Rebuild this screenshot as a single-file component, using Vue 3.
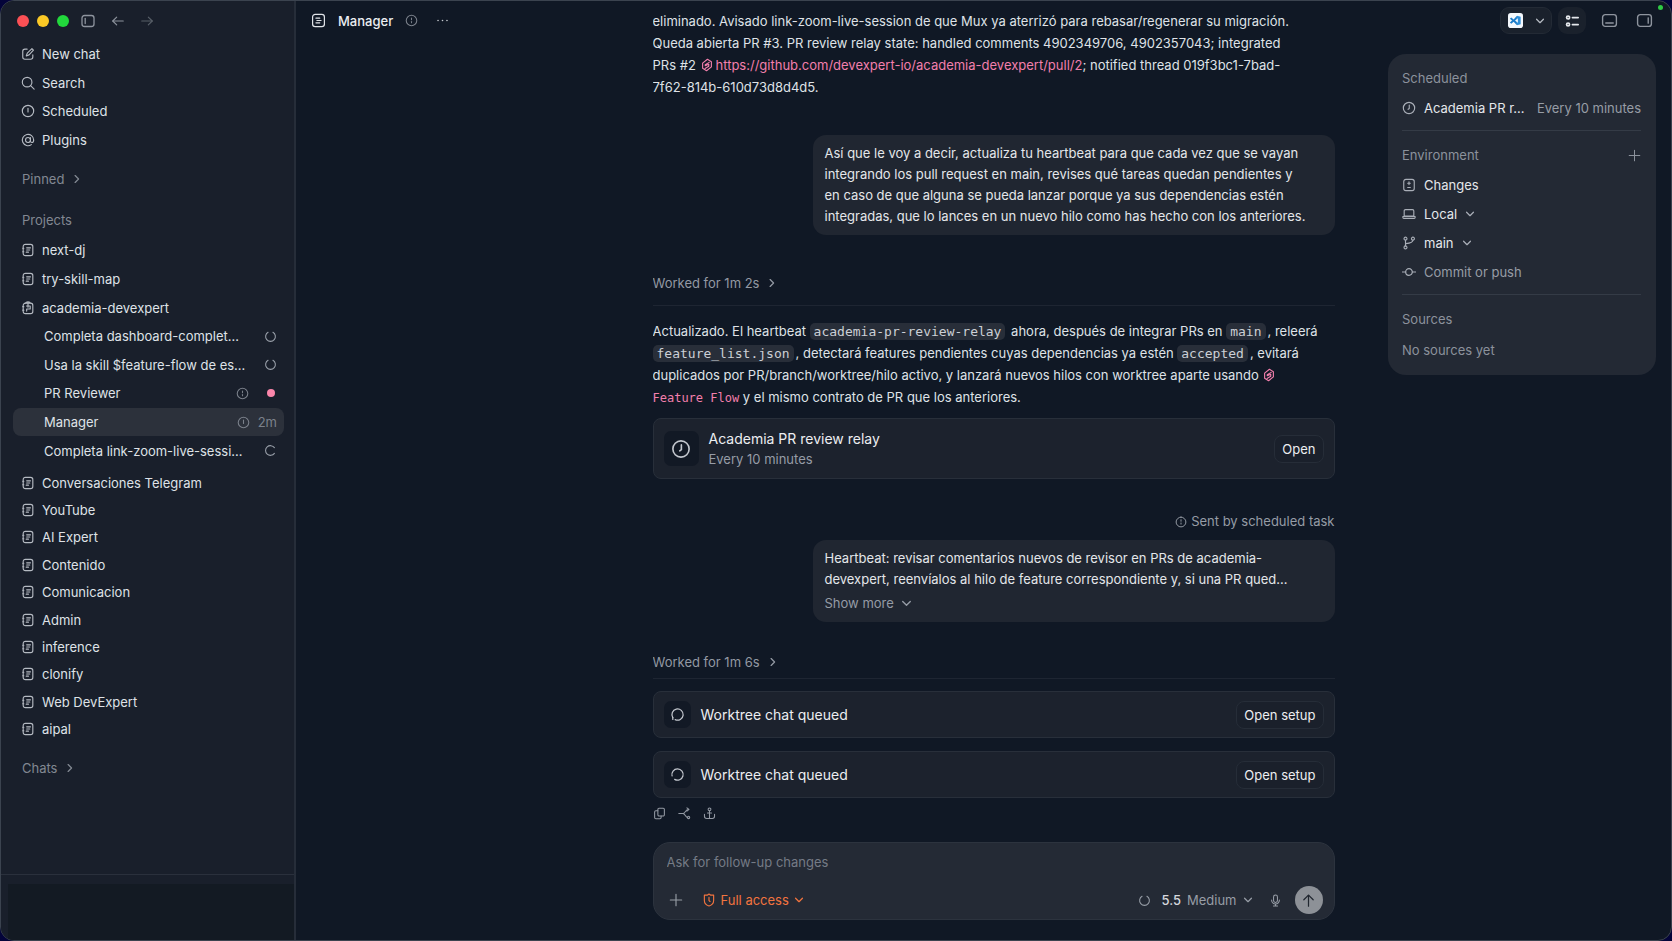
<script setup>
import { h, ref } from "vue";

const icons = {
	panelLeft: ["M4.5 2.5h7a2.5 2.5 0 0 1 2.5 2.5v6a2.5 2.5 0 0 1-2.5 2.5h-7A2.5 2.5 0 0 1 2 11V5a2.5 2.5 0 0 1 2.5-2.5z", "M5.2 5.5v5"],
	panelBottom: ["M4 2.5h8a2.5 2.5 0 0 1 2.5 2.5v6a2.5 2.5 0 0 1-2.5 2.5H4A2.5 2.5 0 0 1 1.5 11V5A2.5 2.5 0 0 1 4 2.5z", "M4.5 10.3h7"],
	panelRight: ["M4 2.5h8a2.5 2.5 0 0 1 2.5 2.5v6a2.5 2.5 0 0 1-2.5 2.5H4A2.5 2.5 0 0 1 1.5 11V5A2.5 2.5 0 0 1 4 2.5z", "M11.5 5.5v5"],
	arrowLeft: ["M14 8H2", "M6.5 3.5 2 8l4.5 4.5"],
	arrowRight: ["M2 8h12", "M9.5 3.5 14 8l-4.5 4.5"],
	arrowUp: ["M8 14V2.5", "M3 7.2l5-5 5 5"],
	compose: ["M7 2.5H4.5A2.5 2.5 0 0 0 2 5v6.5A2.5 2.5 0 0 0 4.5 14H11a2.5 2.5 0 0 0 2.5-2.5V9", "M12.5 1.8l1.7 1.7-5 5.5L6 10.2 7.2 7z"],
	search: ["M7 1.5a5.5 5.5 0 1 1 0 11 5.5 5.5 0 0 1 0-11z", "M11 11l4 4"],
	clock: ["M8 1.5a6.5 6.5 0 1 1 0 13 6.5 6.5 0 0 1 0-13z", "M8.3 4.7v3.8L7 9.5"],
	alert: ["M8 1.5a6.5 6.5 0 1 1 0 13 6.5 6.5 0 0 1 0-13z", "M8 5v4.2"],
	info: ["M8 1.5a6.5 6.5 0 1 1 0 13 6.5 6.5 0 0 1 0-13z", "M8 5v2", "M8 9.3v1.5"],
	at: ["M8 5.2a2.8 2.8 0 1 1 0 5.6 2.8 2.8 0 0 1 0-5.6z", "M10.8 5.3v3.6c0 1.3.7 2 1.7 2s2-.9 2-2.9a6.5 6.5 0 1 0-2.7 5.3"],
	chevronRight: ["M5 2.5 10.5 8 5 13.5"],
	chevronDown: ["M2.5 5.2 8 10.7l5.5-5.5"],
	project: ["M5 1.5h6A2.5 2.5 0 0 1 13.5 4v8a2.5 2.5 0 0 1-2.5 2.5H5A2.5 2.5 0 0 1 2.5 12V4A2.5 2.5 0 0 1 5 1.5z", "M2 6h1.2M2 10h1.2", "M6.5 5.5h4.3M6.5 8H10M6 10.5h2.5"],
	projectOpen: ["M5 2.5h6A2.5 2.5 0 0 1 13.5 5v7a2.5 2.5 0 0 1-2.5 2.5H5A2.5 2.5 0 0 1 2.5 12V5A2.5 2.5 0 0 1 5 2.5z", "M2 6.5h1.2M2 10.5h1.2", "M5.5 2.5Q5.500 1 8 1t2.5 1.5M8 1.5V7M6.3 5.7h4.2v3.5h-4v2.300"],
	thread: ["M4.5 1.5h7a2.8 2.8 0 0 1 2.8 2.8v7.4a2.8 2.8 0 0 1-2.8 2.8h-7a2.8 2.8 0 0 1-2.8-2.8V4.3a2.8 2.8 0 0 1 2.8-2.8z", "M5.3 5.5h4M6.3 8h4.4M5.3 10.5h4"],
	spinnerTop: ["M11 2.8a6 6 0 1 1-6 0"],
	spinnerRight: ["M12.8 11.5a6 6 0 1 1 0-7"],
	spinnerBottomLeft: ["M3 11.300a6 6 0 1 1 2.500 2.200", "M3 11.300v1.900"],
	spinnerLeft: ["M2.2 9.500a6 6 0 1 1 2.800 3.700"],
	dots: ["M2.5 8h.01M8 8h.01M13.5 8h.01"],
	list: ["M3.5 2.3a1.7 1.7 0 1 1 0 3.4 1.7 1.7 0 0 1 0-3.4z", "M3.5 10.3a1.7 1.7 0 1 1 0 3.4 1.7 1.7 0 0 1 0-3.4z", "M8.5 4H15M8.5 12H15"],
	plus: ["M8 1.5v13M1.5 8h13"],
	diff: ["M4.5 1.5h7A2.5 2.5 0 0 1 14 4v8a2.5 2.5 0 0 1-2.5 2.5h-7A2.5 2.5 0 0 1 2 12V4a2.5 2.5 0 0 1 2.5-2.5z", "M8 4.5v3M6.5 6h3M6.5 10.8h3"],
	laptop: ["M4 3h8a1.5 1.5 0 0 1 1.5 1.5v6h-11v-6A1.5 1.5 0 0 1 4 3z", "M1 10.8h14V12a1 1 0 0 1-1 1H2a1 1 0 0 1-1-1z"],
	branch: ["M4 1.3a1.7 1.7 0 1 1 0 3.4 1.7 1.7 0 0 1 0-3.4z", "M4 11.3a1.7 1.7 0 1 1 0 3.4 1.7 1.7 0 0 1 0-3.4z", "M12.5 1.3a1.7 1.7 0 1 1 0 3.4 1.7 1.7 0 0 1 0-3.4z", "M4 4.7v6.6M12.5 4.7c0 3.3-4.5 3.8-8 4"],
	commit: ["M8 4.2a3.8 3.8 0 1 1 0 7.6 3.8 3.8 0 0 1 0-7.6z", "M.5 8h3.7M11.8 8h3.7"],
	copy: ["M7.5 1.5h5A1.5 1.5 0 0 1 14 3v6.5a1.5 1.5 0 0 1-1.5 1.5h-5A1.5 1.5 0 0 1 6 9.5V3a1.5 1.5 0 0 1 1.5-1.5z", "M6 4.5H3.5A1.5 1.5 0 0 0 2 6v7a1.5 1.5 0 0 0 1.5 1.5h5A1.5 1.5 0 0 0 10 13v-2"],
	fork: ["M1 8h5c3 0 3-5 7-5M6 8c3 0 3 5 6 5", "M11 1l2.5 2L11 5.2", "M13 11.5a1.4 1.4 0 1 1 0 2.8 1.4 1.4 0 0 1 0-2.8z"],
	anchor: ["M8 1.2a1.7 1.7 0 1 1 0 3.4 1.7 1.7 0 0 1 0-3.4z", "M8 4.6v9.6M5.5 7.5h5", "M1.8 9v2.5a2.7 2.7 0 0 0 2.7 2.7h7a2.7 2.7 0 0 0 2.7-2.7V9"],
	shield: ["M8 1.2l2 1.3h3.3v6c0 3.5-2.8 5.5-5.3 6.3-2.5-.8-5.3-2.8-5.3-6.3v-6H6z", "M8 5v3.7l1.2 1"],
	mic: ["M8 1.2a2.4 2.4 0 0 1 2.4 2.4V8a2.4 2.4 0 0 1-4.8 0V3.6A2.4 2.4 0 0 1 8 1.2z", "M3.2 7.5a4.8 4.8 0 0 0 9.6 0M8 12.5v2.3M5.5 14.8h5"],
	linked: ["M8.500 1.500 13 4.200v6L7.500 14.500 3 11.800v-6z", "M10.500 5 6 7.800v1L10 7.200v2.300L5.800 12"],
};

function Icon(props) {
	return h(
		"svg",
		{ viewBox: "0 0 16 16", width: props.size, height: props.size, class: "icon", "aria-hidden": "true" },
		icons[props.name].map((d) => h("path", { d }))
	);
}
Icon.props = { name: String, size: { type: Number, default: 14 } };

const nav = [
	{ icon: "compose", label: "New chat" },
	{ icon: "search", label: "Search" },
	{ icon: "alert", label: "Scheduled" },
	{ icon: "at", label: "Plugins" },
];

const openProjects = [
	{ icon: "project", label: "next-dj" },
	{ icon: "project", label: "try-skill-map" },
	{ icon: "projectOpen", label: "academia-devexpert" },
];

const threads = [
	{ label: "Completa dashboard-complet…", spinner: "spinnerTop" },
	{ label: "Usa la skill $feature-flow de es…", spinner: "spinnerTop" },
	{ label: "PR Reviewer", info: "info", unread: true },
	{ label: "Manager", info: "alert", time: "2m", active: true },
	{ label: "Completa link-zoom-live-sessi…", spinner: "spinnerRight" },
];

const projects = [
	"Conversaciones Telegram",
	"YouTube",
	"AI Expert",
	"Contenido",
	"Comunicacion",
	"Admin",
	"inference",
	"clonify",
	"Web DevExpert",
	"aipal",
];

const queued = ["spinnerBottomLeft", "spinnerLeft"];

const message = ref("");
</script>

<template>
	<div class="window">
		<aside class="sidebar">
			<div class="titlebar">
				<span class="light red"></span>
				<span class="light yellow"></span>
				<span class="light green"></span>
				<button class="tool" aria-label="Toggle sidebar"><Icon name="panelLeft" :size="16" /></button>
				<button class="tool" aria-label="Back"><Icon name="arrowLeft" /></button>
				<button class="tool dim" aria-label="Forward"><Icon name="arrowRight" /></button>
			</div>

			<nav class="rows nav">
				<button v-for="item in nav" :key="item.label" class="row">
					<Icon :name="item.icon" />{{ item.label }}
				</button>
			</nav>

			<button class="section">Pinned <Icon name="chevronRight" :size="10" class="chevron" /></button>
			<h2 class="section">Projects</h2>

			<div class="rows open-projects">
				<button v-for="item in openProjects" :key="item.label" class="row">
					<Icon :name="item.icon" />{{ item.label }}
				</button>
			</div>

			<div class="rows threads">
				<button v-for="item in threads" :key="item.label" class="thread" :class="{ active: item.active }">
					<span class="thread-label">{{ item.label }}</span>
					<Icon v-if="item.info" :name="item.info" :size="13" class="muted" />
					<Icon v-if="item.spinner" :name="item.spinner" :size="13" class="soft" />
					<span v-if="item.unread" class="unread"></span>
					<span v-if="item.time" class="time">{{ item.time }}</span>
				</button>
			</div>

			<div class="rows projects">
				<button v-for="label in projects" :key="label" class="row">
					<Icon name="project" />{{ label }}
				</button>
			</div>

			<button class="section">Chats <Icon name="chevronRight" :size="10" class="chevron" /></button>

			<div class="account">
				<div class="account-box"></div>
			</div>
		</aside>

		<main class="main">
			<header class="heading">
				<Icon name="thread" :size="15" />
				<h1>Manager</h1>
				<Icon name="info" :size="13" class="muted" />
				<button class="tool" aria-label="More"><Icon name="dots" :size="13" class="bold" /></button>
			</header>

			<div class="column">
				<div class="conversation">
					<p class="answer">
						eliminado. Avisado link-zoom-live-session de que Mux ya aterrizó para rebasar/regenerar su migración.<br />
						Queda abierta PR #3. PR review relay state: handled comments 4902349706, 4902357043; integrated<br />
						PRs #2
						<a href="https://github.com/devexpert-io/academia-devexpert/pull/2"><Icon name="linked" :size="14" class="inline" />https://github.com/devexpert-io/academia-devexpert/pull/2</a>;
						notified thread 019f3bc1-7bad-<br />
						7f62-814b-610d73d8d4d5.
					</p>

					<p class="bubble first">
						Así que le voy a decir, actualiza tu heartbeat para que cada vez que se vayan<br />
						integrando los pull request en main, revises qué tareas quedan pendientes y<br />
						en caso de que alguna se pueda lanzar porque ya sus dependencias estén<br />
						integradas, que lo lances en un nuevo hilo como has hecho con los anteriores.
					</p>

					<button class="worked spaced">Worked for 1m 2s <Icon name="chevronRight" :size="10" class="chevron" /></button>

					<p class="answer">
						Actualizado. El heartbeat <code>academia-pr-review-relay</code> ahora, después de integrar PRs en
						<code>main</code>, releerá<br />
						<code>feature_list.json</code>, detectará features pendientes cuyas dependencias ya estén
						<code>accepted</code>, evitará<br />
						duplicados por PR/branch/worktree/hilo activo, y lanzará nuevos hilos con worktree aparte usando
						<a href="#"><Icon name="linked" :size="14" class="inline" /><br /><span class="skill">Feature Flow</span></a>
						y el mismo contrato de PR que los anteriores.
					</p>

					<section class="card relay">
						<span class="tile large"><Icon name="clock" :size="20" /></span>
						<div class="card-text">
							<h3>Academia PR review relay</h3>
							<p>Every 10 minutes</p>
						</div>
						<button class="open">Open</button>
					</section>

					<p class="sent"><Icon name="info" :size="12" /> Sent by scheduled task</p>

					<div class="bubble">
						<p>
							Heartbeat: revisar comentarios nuevos de revisor en PRs de academia-<br />
							devexpert, reenvíalos al hilo de feature correspondiente y, si una PR qued…
						</p>
						<button class="more">Show more <Icon name="chevronDown" :size="11" class="chevron" /></button>
					</div>

					<button class="worked">Worked for 1m 6s <Icon name="chevronRight" :size="10" class="chevron" /></button>

					<section v-for="spinner in queued" :key="spinner" class="card">
						<span class="tile"><Icon :name="spinner" :size="15" /></span>
						<h3>Worktree chat queued</h3>
						<button class="open">Open setup</button>
					</section>

					<div class="actions">
						<button aria-label="Copy"><Icon name="copy" :size="13" /></button>
						<button aria-label="Fork"><Icon name="fork" :size="13" /></button>
						<button aria-label="Anchor"><Icon name="anchor" :size="13" /></button>
					</div>
				</div>

				<form class="composer" @submit.prevent>
					<textarea v-model="message" rows="1" aria-label="Message" placeholder="Ask for follow-up changes"></textarea>
					<div class="composer-bar">
						<button type="button" aria-label="Add"><Icon name="plus" /></button>
						<label class="pick access">
							<Icon name="shield" />
							<select aria-label="Access"><option>Full access</option></select>
							<Icon name="chevronDown" :size="10" class="chevron" />
						</label>
						<Icon name="spinnerTop" :size="13" class="usage" />
						<label class="pick model">
							<span>5.5</span>
							<select aria-label="Effort"><option>Medium</option></select>
							<Icon name="chevronDown" :size="10" class="chevron" />
						</label>
						<button type="button" aria-label="Dictate"><Icon name="mic" :size="13" /></button>
						<button class="send" aria-label="Send"><Icon name="arrowUp" :size="15" /></button>
					</div>
				</form>
			</div>

			<div class="side">
				<div class="toolbar">
					<button class="chip editor" aria-label="Open in editor">
						<svg viewBox="0 0 16 16" width="15" height="15" aria-hidden="true">
							<rect width="16" height="16" rx="3" fill="#f4f8fc" />
							<path d="M9.5 3v10L6 9.2l-2.500 2.300L2 10.200 4.300 8 2 6l1.500-1.300L6 6.800z" fill="#1c7cc9" />
							<path d="M9.5 3l4 1v8l-4 1z" fill="#2f8fd8" />
							<path d="M10.5 5.5v5L7.500 8z" fill="#f4f8fc" />
						</svg>
						<Icon name="chevronDown" :size="10" class="chevron" />
					</button>
					<button class="chip" aria-label="Summary"><Icon name="list" class="bright" /></button>
					<button class="tool" aria-label="Toggle terminal"><Icon name="panelBottom" :size="17" /></button>
					<button class="tool" aria-label="Toggle right panel"><Icon name="panelRight" :size="17" /></button>
					<span class="live"></span>
				</div>

				<aside class="panel">
					<h2>Scheduled</h2>
					<button class="entry task">
						<Icon name="clock" />
						<span>Academia PR r…</span>
						<small>Every 10 minutes</small>
					</button>
					<hr />
					<h2>Environment <button aria-label="Add environment"><Icon name="plus" :size="13" /></button></h2>
					<button class="entry"><Icon name="diff" /> Changes</button>
					<label class="entry pick">
						<Icon name="laptop" />
						<select aria-label="Location"><option>Local</option></select>
						<Icon name="chevronDown" :size="10" class="chevron" />
					</label>
					<label class="entry pick">
						<Icon name="branch" />
						<select aria-label="Branch"><option>main</option></select>
						<Icon name="chevronDown" :size="10" class="chevron" />
					</label>
					<button class="entry quiet"><Icon name="commit" /> Commit or push</button>
					<hr />
					<h2>Sources</h2>
					<p>No sources yet</p>
				</aside>
			</div>
		</main>
	</div>
</template>

<style>
body {
	background: #04043a;
}
</style>

<style scoped>
* {
	box-sizing: border-box;
	margin: 0;
}

.window {
	display: flex;
	height: 100vh;
	overflow: hidden;
	border: 1px solid #3b434f;
	border-radius: 14px;
	background: #101825;
	color: #dfe2e7;
	font: 13px/22px Inter, "Liberation Sans", sans-serif;
}

button,
select,
textarea {
	padding: 0;
	border: 0;
	background: none;
	color: inherit;
	font: inherit;
}

button {
	display: flex;
	align-items: center;
	text-align: left;
	white-space: nowrap;
	cursor: pointer;
}

select {
	appearance: none;
	field-sizing: content;
}

h1,
h2,
h3 {
	font-size: 13px;
	font-weight: 400;
}

a {
	color: #f27fac;
	text-decoration: none;
}

.icon {
	flex: none;
	fill: none;
	stroke: currentColor;
	stroke-width: 1.3;
	stroke-linecap: round;
	stroke-linejoin: round;
}

.chevron,
.bold,
.bright {
	stroke-width: 2;
}

.bright {
	color: #e4e7eb;
}

.muted {
	color: #7b818b;
}

.soft {
	color: #9aa0aa;
}

.inline {
	margin-right: 2px;
	vertical-align: -2px;
}

.tool {
	color: #8e949e;
}

.dim {
	color: #596069;
}

/* sidebar */
.sidebar {
	display: flex;
	flex-direction: column;
	flex: none;
	width: 295px;
	border-right: 2px solid #262d39;
	background: #191f2b;
}

.titlebar {
	display: flex;
	align-items: center;
	height: 39px;
	padding-left: 16px;
}

.light {
	width: 12px;
	height: 12px;
	margin-right: 8px;
	border-radius: 50%;
}

.red {
	background: #fb5055;
}

.yellow {
	background: #fbc926;
}

.green {
	background: #22d83c;
}

.titlebar .tool {
	margin-left: 3px;
	margin-right: 12px;
}

.rows {
	display: grid;
	grid-auto-rows: 1fr;
}

.nav {
	height: 114px;
}

.open-projects {
	height: 87px;
}

.threads {
	height: 143px;
	margin-bottom: 4px;
	padding: 0 10px 0 12px;
}

.projects {
	height: 274px;
}

.row {
	gap: 7px;
	padding-left: 20px;
}

.row .icon {
	color: #b5bac2;
}

.section {
	display: flex;
	align-items: center;
	gap: 8px;
	height: 40px;
	margin-top: 5px;
	padding-left: 21px;
	color: #828892;
}

h2.section {
	height: 31px;
}

.thread {
	padding: 0 7px 0 31px;
	border-radius: 8px;
}

.thread.active {
	background: #2c313b;
}

.thread-label {
	flex: 1;
	min-width: 0;
	overflow: hidden;
	text-overflow: ellipsis;
}

.unread {
	width: 8px;
	height: 8px;
	margin: 0 2px 0 18px;
	border-radius: 50%;
	background: #fb86ab;
}

.time {
	margin-left: 8px;
	color: #7b818b;
}

.account {
	margin-top: auto;
	padding: 9px 0 0 7px;
	border-top: 1px solid #2a303c;
}

.account-box {
	height: 56px;
	background: #131a23;
}

/* main area */
.main {
	display: grid;
	grid-template-columns: minmax(200px, 1fr) minmax(0, 682px) minmax(284px, 1fr);
	flex: 1;
	min-width: 0;
}

.heading {
	display: flex;
	align-items: center;
	gap: 12px;
	height: 39px;
	padding-left: 15px;
}

.heading h1 {
	color: #eceef1;
	font-weight: 500;
}

.heading .tool {
	margin-left: 6px;
	color: #c6cad0;
}

.column {
	display: flex;
	flex-direction: column;
	min-height: 0;
	margin: 0 -10px 0 10px;
}

.conversation {
	display: flex;
	flex-direction: column;
	flex: 1;
	min-height: 0;
	padding-top: 9px;
	overflow: hidden;
}

.bubble {
	align-self: flex-end;
	flex: none;
	width: 522px;
	max-width: 100%;
	padding: 8px 12px;
	border-radius: 13px;
	background: #202631;
	color: #e4e6ea;
	line-height: 21px;
}

.bubble.first {
	margin-top: 37px;
}

.worked {
	gap: 8px;
	flex: none;
	height: 33px;
	margin: 24px 0 12px;
	border-bottom: 1px solid #1e2532;
	color: #9399a3;
}

.worked.spaced {
	height: 45px;
	margin: 26px 0 14px;
}

code {
	margin-right: 2px;
	padding: 1px 4px;
	border-radius: 5px;
	background: #282e39;
	color: #ccd0d6;
	font: 13px/16px "DejaVu Sans Mono", monospace;
}

.skill {
	font: 12px/16px "DejaVu Sans Mono", monospace;
}

.card {
	display: flex;
	align-items: center;
	flex: none;
	gap: 10px;
	height: 47px;
	margin-bottom: 13px;
	padding: 0 10px;
	border: 1px solid #282f3a;
	border-radius: 8px;
	background: #1c222d;
}

.card.relay {
	height: 61px;
	margin: 10px 0 32px;
}

.card h3 {
	color: #eceef1;
	font-size: 14px;
	line-height: 20px;
}

.card-text p {
	color: #969ca6;
	line-height: 20px;
}

.tile {
	display: grid;
	place-items: center;
	width: 27px;
	height: 27px;
	border-radius: 7px;
	background: #121925;
	color: #c3c7ce;
}

.tile.large {
	width: 35px;
	height: 35px;
}

.open {
	height: 28px;
	margin-left: auto;
	padding: 0 7px;
	border: 1px solid #262d38;
	border-radius: 8px;
	background: #1a202b;
	color: #eceef1;
}

.sent {
	display: flex;
	align-items: center;
	justify-content: flex-end;
	gap: 4px;
	margin-bottom: 8px;
	color: #969ca6;
	line-height: 21px;
}

.more {
	gap: 7px;
	height: 21px;
	margin-top: 3px;
	color: #959ba5;
}

.actions {
	display: flex;
	gap: 12px;
	margin-top: -4px;
	color: #9399a3;
}

.composer {
	flex: none;
	margin-bottom: 20px;
	padding: 8px 11px 5px 13px;
	border: 1px solid #2c333e;
	border-radius: 17px;
	background: #242a35;
}

textarea {
	display: block;
	width: 100%;
	height: 22px;
	outline: 0;
	resize: none;
}

textarea::placeholder {
	color: #757b86;
}

.composer-bar {
	display: flex;
	align-items: center;
	gap: 16px;
	height: 28px;
	margin-top: 13px;
	padding-left: 2px;
	color: #979da6;
}

.pick {
	display: flex;
	align-items: center;
	gap: 6px;
}

.access {
	gap: 5px;
	margin-left: 3px;
	color: #f2743f;
}

.usage {
	margin-left: auto;
	margin-right: -6px;
}

.model span {
	color: #d5d8dd;
	font-weight: 500;
}

.send {
	justify-content: center;
	width: 28px;
	height: 28px;
	margin-left: -3px;
	border-radius: 50%;
	background: #8d9197;
	color: #20262f;
}

/* toolbar and summary panel */
.side {
	justify-self: end;
	width: 284px;
	padding-right: 15px;
}

.toolbar {
	display: flex;
	align-items: center;
	justify-content: flex-end;
	gap: 6px;
	height: 39px;
}

.toolbar .tool {
	margin-left: 9px;
	margin-right: 3px;
}

.chip {
	justify-content: center;
	width: 28px;
	height: 27px;
	border-radius: 9px;
	background: #1a212c;
	color: #b5bac2;
}

.chip.editor {
	gap: 12px;
	width: 52px;
	border: 1px solid #232a35;
}

.live {
	position: absolute;
	top: 5px;
	right: 9px;
	width: 5px;
	height: 5px;
	border-radius: 50%;
	background: #2fc944;
}

.panel {
	margin: 14px 0 0 1px;
	padding: 13px 15px 14px 14px;
	border-radius: 18px;
	background: #232934;
}

.panel h2 {
	display: flex;
	align-items: center;
	justify-content: space-between;
	color: #8c929c;
	line-height: 22px;
}

.panel h2 + * {
	margin-top: 4px;
}

.panel p {
	padding-top: 5px;
	color: #8c929c;
}

.panel hr {
	margin: 8px 0 13px;
	border: 0;
	border-top: 1px solid #343b46;
}

.entry {
	gap: 8px;
	width: 100%;
	height: 29px;
	color: #e4e7eb;
}

.entry .icon {
	color: #a9aeb7;
}

.task small {
	margin-left: auto;
	color: #979da6;
	font-size: 13px;
}

.quiet {
	color: #979da6;
}
</style>
